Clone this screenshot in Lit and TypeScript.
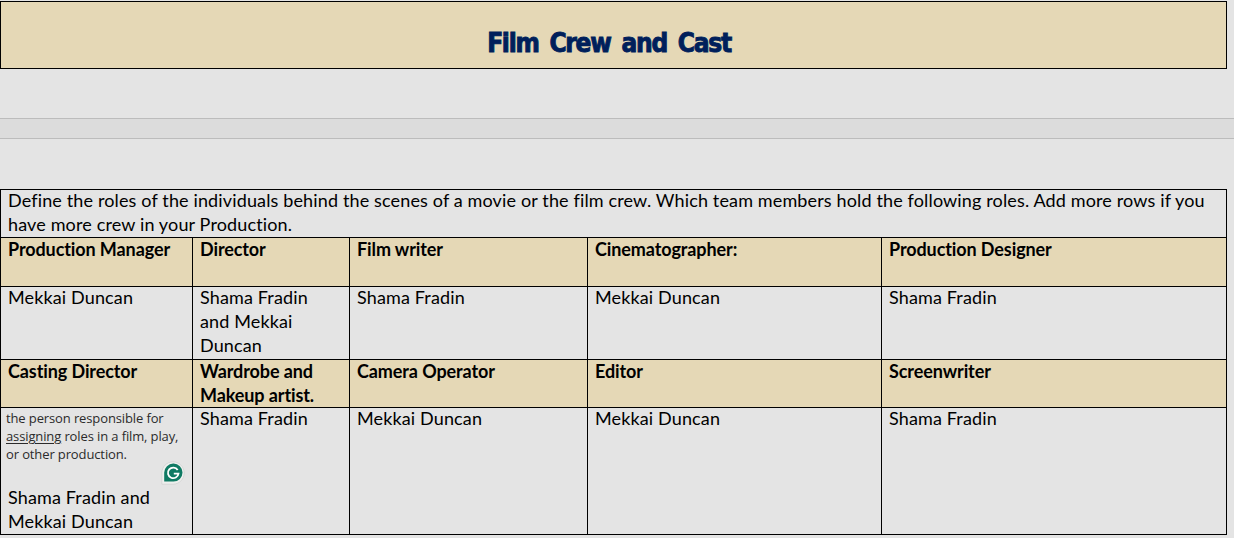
import { LitElement, html, css } from "lit";
import { customElement } from "lit/decorators.js";

@customElement("app-root")
export class AppRoot extends LitElement {
  static styles = css`
    :host { display: block; width: 1234px; height: 538px; overflow: hidden; background: #e4e4e4; font-family: "Lato", sans-serif; color: #000; }
    .page { width: 1227px; padding-top: 1px; }
    .title-box { box-sizing: border-box; height: 68px; background: #e5d8b6; border: 1px solid #000; display: flex; align-items: flex-end; justify-content: center; padding: 0 9px 7px 0; }
    h1 { margin: 0; font-family: "DejaVu Sans", sans-serif; font-stretch: condensed; font-size: 26px; line-height: 36px; font-weight: 700; color: #001f5b; -webkit-text-stroke: 0.9px #001f5b; letter-spacing: -1.25px; word-spacing: 4px; }
    .band { width: 1234px; box-sizing: border-box; height: 21px; margin-top: 49px; background: #dcdcdc; border-top: 1px solid #bcbcbc; border-bottom: 1px solid #bcbcbc; }
    .table { display: grid; grid-template-columns: 191px 157px 238px 294px 345px; margin-top: 50px; border: 1px solid #000; box-sizing: border-box; font-size: 18px; line-height: 24px; letter-spacing: 0.14px; }
    .intro { grid-column: 1 / -1; padding: 0 7px; height: 47px; }
    .intro > div { margin-top: -2px; }
    .cell { box-sizing: border-box; padding: 0 10px 0 7px; border-top: 1px solid #000; border-left: 1px solid #000; position: relative; }
    .cell.first { border-left: none; }
    .txt { margin-top: -2px; }
    .head { background: #e5d8b6; font-weight: 700; letter-spacing: -0.1px; }
    .head .txt { margin-top: -1px; }
    .r1 { height: 49px; } .r2 { height: 73px; } .r3 { height: 48px; } .r4 { height: 127px; }
    .note { font-family: "Open Sans", sans-serif; font-size: 13px; line-height: 18px; letter-spacing: -0.12px; color: #2b2b2b; margin: 1px -8px 24px -2px; }
    .note u { text-underline-offset: 2px; }
    .g { position: absolute; left: 160px; top: 53px; width: 24px; height: 24px; }
  `;

  render() {
    const row = (cls: string, items: string[], first = true) =>
      items.map((t, i) => html`<div class="cell ${cls} ${first && i === 0 ? "first" : ""}"><div class="txt">${t}</div></div>`);
    return html`<div class="page">
      <div class="title-box"><h1>Film Crew and Cast</h1></div>
      <div class="band"></div>
      <div class="table">
        <div class="intro"><div>Define the roles of the individuals behind the scenes of a movie or the film crew. Which team members hold the following roles. Add more rows if you have more crew in your Production.</div></div>
        ${row("head r1", ["Production Manager", "Director", "Film writer", "Cinematographer:", "Production Designer"])}
        ${row("r2", ["Mekkai Duncan", "Shama Fradin and Mekkai Duncan", "Shama Fradin", "Mekkai Duncan", "Shama Fradin"])}
        ${row("head r3", ["Casting Director", "Wardrobe and Makeup artist.", "Camera Operator", "Editor", "Screenwriter"])}
        <div class="cell r4 first">
          <div class="note">the person responsible for <u>assigning</u> roles in a film, play, or other production.</div>
          <div class="txt">Shama Fradin and Mekkai Duncan</div>
          <svg class="g" viewBox="0 0 24 24">
            <path d="M12 .8c6.200 0 11.200 5 11.200 11.200s-5 11.200-11.200 11.200H.8V12C.8 5.800 5.800.8 12 .8z" fill="#eef0ee" stroke="#d2d2d2" stroke-width=".8"/>
            <path d="M12.500 2.600a9 9 0 1 1 0 18H3.200v-9a9 9 0 0 1 9.300-9z" fill="#0f7a63"/>
            <path d="M16.700 9a5.300 5.300 0 1 0 .8 3.600h-4.700" fill="none" stroke="#fff" stroke-width="1.8"/>
          </svg>
        </div>
        ${row("r4", ["Shama Fradin", "Mekkai Duncan", "Mekkai Duncan", "Shama Fradin"], false)}
      </div>
    </div>`;
  }
}
